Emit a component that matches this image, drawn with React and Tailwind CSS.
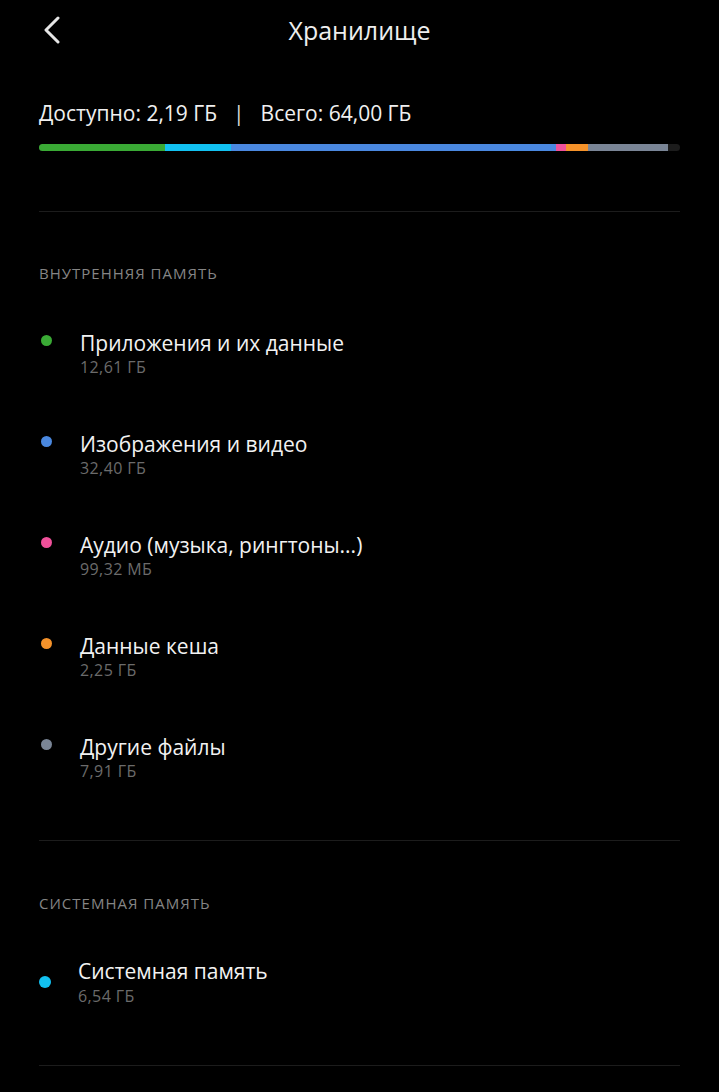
import React from "react";

const segments = [
  { color: "bg-[#3aaa35]", w: 126 },
  { color: "bg-[#12c1f1]", w: 66 },
  { color: "bg-[#4a88e0]", w: 325 },
  { color: "bg-[#f0509a]", w: 10 },
  { color: "bg-[#f5922a]", w: 22 },
  { color: "bg-[#7a8596]", w: 80 },
];

const internal = [
  { dot: "bg-[#3aaa35]", title: "Приложения и их данные", size: "12,61 ГБ" },
  { dot: "bg-[#4a88e0]", title: "Изображения и видео", size: "32,40 ГБ" },
  { dot: "bg-[#f0509a]", title: "Аудио (музыка, рингтоны...)", size: "99,32 МБ" },
  { dot: "bg-[#f5922a]", title: "Данные кеша", size: "2,25 ГБ" },
  { dot: "bg-[#7a8596]", title: "Другие файлы", size: "7,91 ГБ" },
];

const Item = ({ dot, title, size, first }) => (
  <div className={`flex ${first ? "mt-[47px]" : "mt-[54px]"}`}>
    <div className="w-[41px] shrink-0">
      <div className={`w-[11px] h-[11px] rounded-full mt-[5px] ml-[2px] ${dot}`}></div>
    </div>
    <div>
      <div className="text-[21px] leading-[26px] text-[#f2f2f2]">{title}</div>
      <div className="text-[16px] leading-[20px] mt-[1px] tracking-[0.4px] text-[#6b6b6b]">{size}</div>
    </div>
  </div>
);

const App = () => {
  return (
    <div
      className="min-h-[1092px] bg-black text-white"
      style={{ fontFamily: '"Open Sans", "Noto Sans", sans-serif' }}
    >
      {/* Header */}
      <div className="h-[60px] grid grid-cols-[1fr_auto_1fr] items-center px-[39px]">
        <svg width="22" height="28" viewBox="0 0 22 28" className="ml-[2px]">
          <path d="M17 2 L5 14 L17 26" fill="none" stroke="#e6e6e6" strokeWidth="3" strokeLinecap="round" strokeLinejoin="round" />
        </svg>
        <div className="text-[25px] leading-[30px] text-[#eeeeee]">Хранилище</div>
        <div></div>
      </div>

      <div className="px-[39px]">
        {/* Summary */}
        <div className="mt-[41px] text-[21px] leading-[24px] text-[#f0f0f0] flex items-center">
          <span>Доступно: 2,19 ГБ</span>
          <span className="mx-[16px] text-[#dddddd]">|</span>
          <span>Всего: 64,00 ГБ</span>
        </div>

        {/* Bar */}
        <div className="mt-[19px] h-[7px] rounded-full bg-[#1c1c1c] overflow-hidden flex">
          {segments.map((s, i) => (
            <div key={i} className={`h-full ${s.color}`} style={{ width: s.w }}></div>
          ))}
        </div>

        <div className="mt-[60px] border-t border-[#1c1c1c]"></div>

        {/* Internal */}
        <div className="mt-[51px] text-[15px] leading-[20px] tracking-[1px] text-[#858585]">ВНУТРЕННЯЯ ПАМЯТЬ</div>
        {internal.map((it, i) => (
          <Item key={i} {...it} first={i === 0} />
        ))}

        <div className="mt-[59px] border-t border-[#1c1c1c]"></div>

        {/* System */}
        <div className="mt-[52px] text-[15px] leading-[20px] tracking-[1px] text-[#858585]">СИСТЕМНАЯ ПАМЯТЬ</div>
        <div className="flex items-center mt-[45px]">
          <div className="w-[39px] shrink-0">
            <div className="w-[12px] h-[12px] rounded-full bg-[#12c1f1]"></div>
          </div>
          <div>
            <div className="text-[21px] leading-[26px] text-[#f2f2f2]">Системная память</div>
            <div className="text-[16px] leading-[20px] mt-[2px] tracking-[0.4px] text-[#6b6b6b]">6,54 ГБ</div>
          </div>
        </div>

        <div className="mt-[59px] border-t border-[#1c1c1c]"></div>
      </div>
    </div>
  );
};

export default App;
